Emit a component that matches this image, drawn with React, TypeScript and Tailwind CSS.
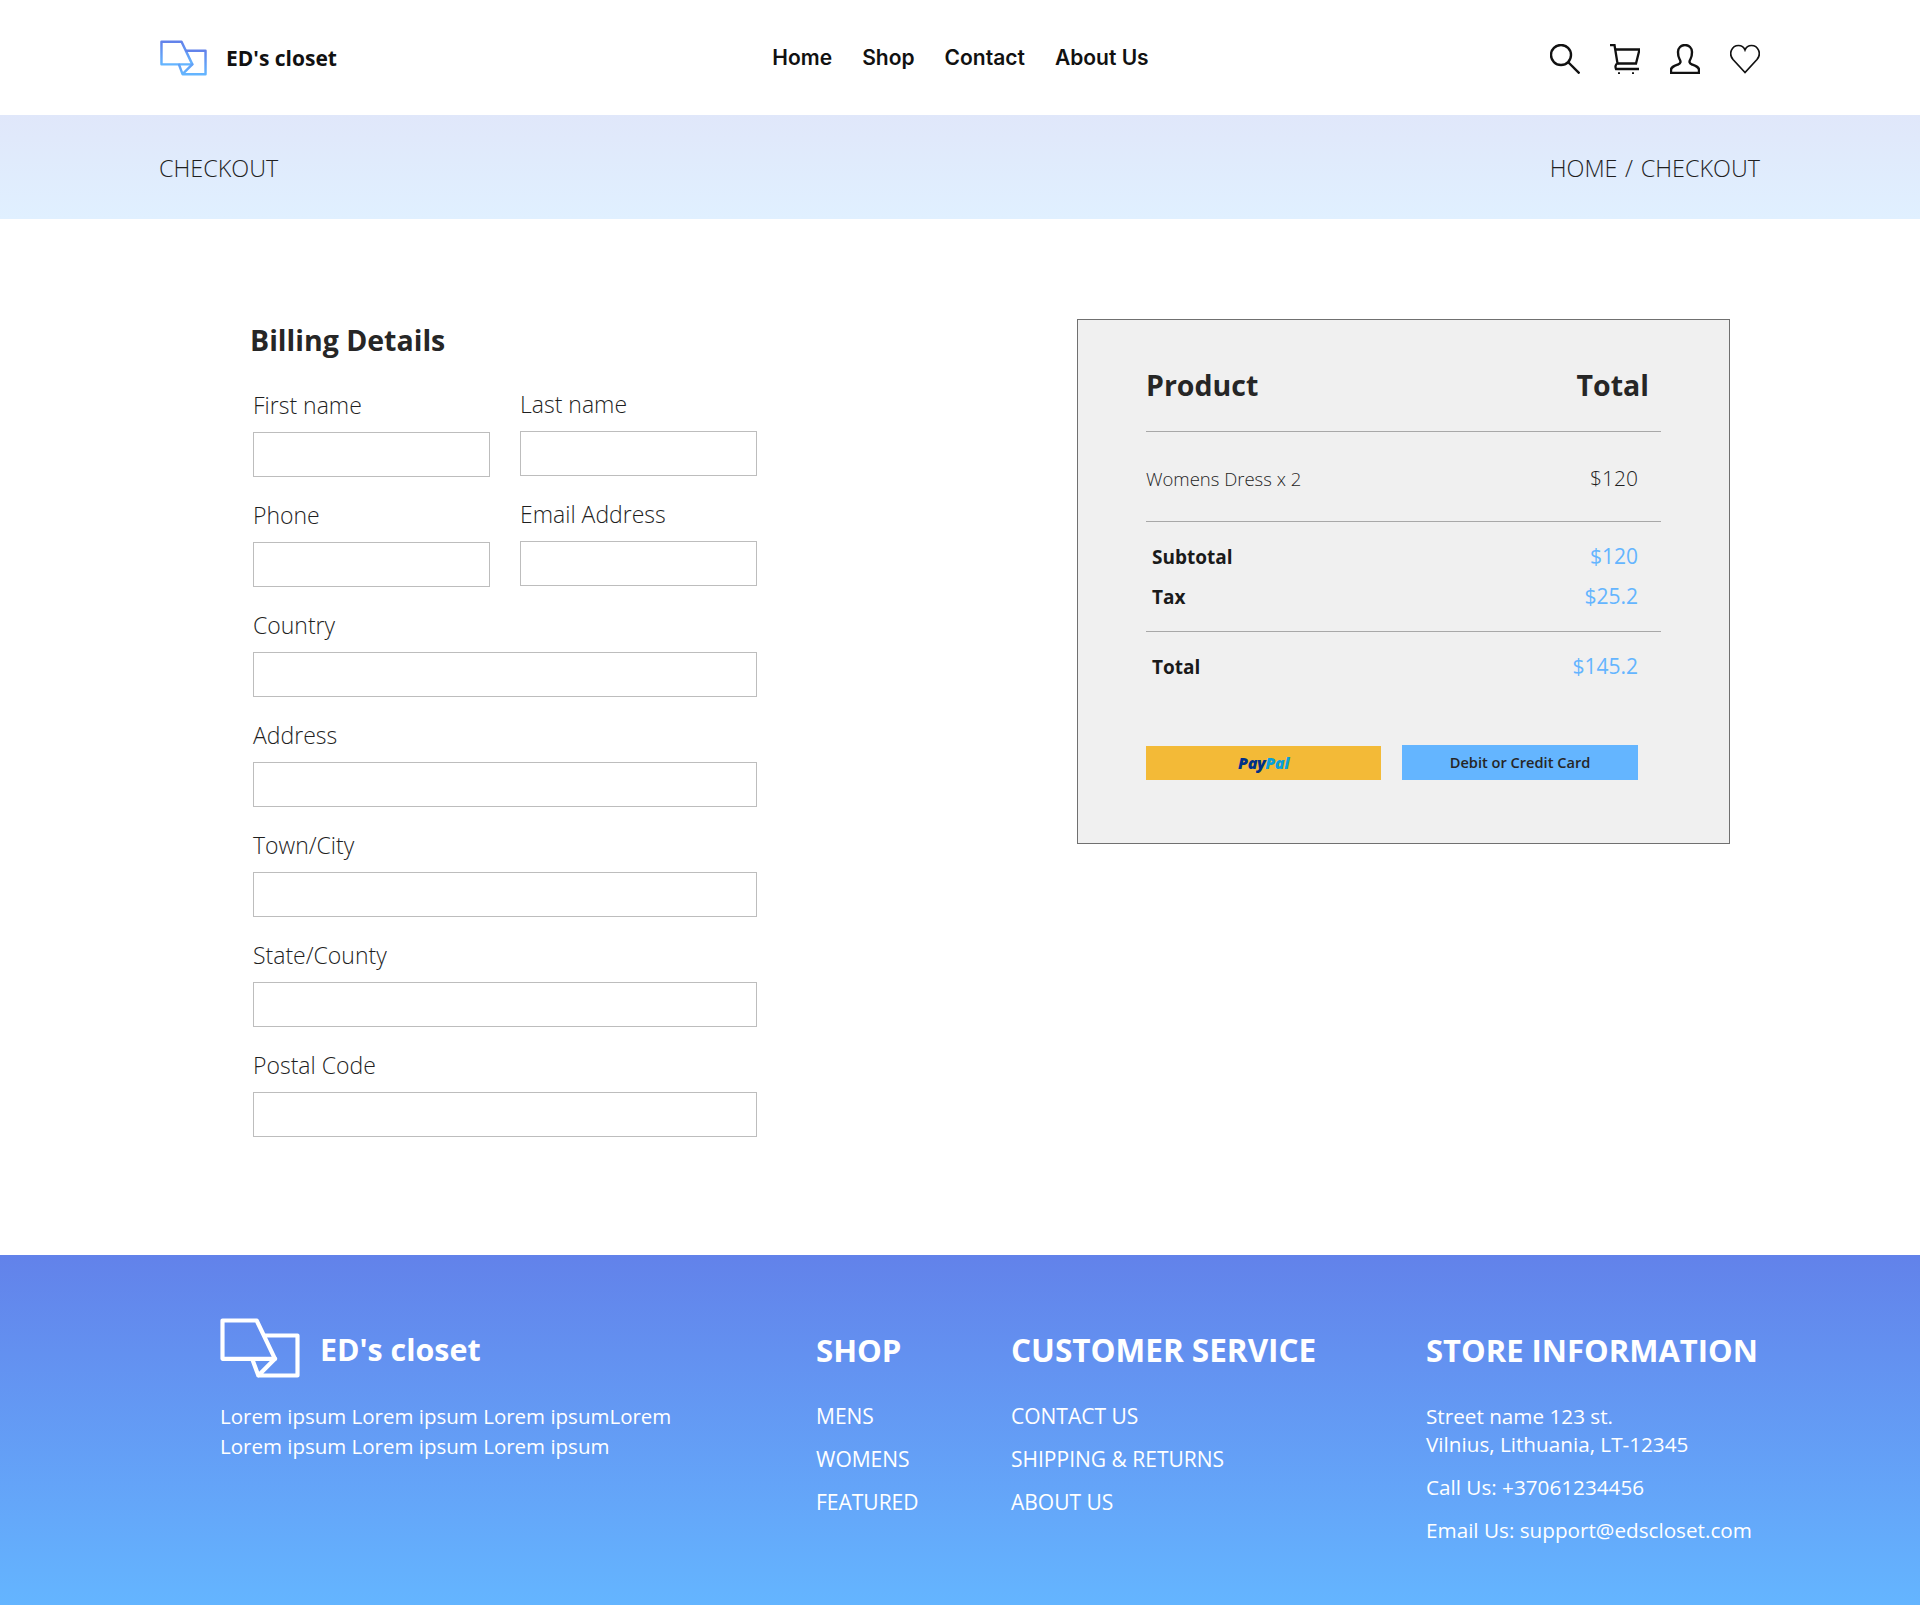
const segoe = "font-['Open_Sans','Noto_Sans',sans-serif]";

function Logo({ id, className, stroke }: { id: string; className: string; stroke?: string }) {
  return (
    <svg viewBox="0 0 48 36" fill="none" className={className}>
      <defs>
        <linearGradient id={id} x1="0" y1="0" x2="0" y2="1">
          <stop offset="0" stopColor="#6282ea" />
          <stop offset="1" stopColor="#64b5ff" />
        </linearGradient>
      </defs>
      <g stroke={stroke || `url(#${id})`} strokeWidth="2.5" strokeLinejoin="round" strokeLinecap="round">
        <path d="M1.5 1.5H22L33 24.5H1.5Z" />
        <path d="M27 10.5H46.5V34.5H23L19.5 25M23 34.5L33 24.5" />
      </g>
    </svg>
  );
}

function HeaderIcons() {
  return (
    <div className="flex gap-[30px] text-[#111]">
      <svg viewBox="0 0 30 30" fill="none" stroke="currentColor" strokeWidth="2.4" className="w-[30px] h-[30px]">
        <circle cx="11" cy="11" r="10" />
        <path d="M18 18L29.5 29.5" />
      </svg>
      <svg viewBox="0 0 30 30" fill="none" stroke="currentColor" strokeWidth="2.3" className="w-[30px] h-[30px]">
        <path d="M0 1H4.5L7.5 19.5C5.5 20 5 23 6 25H29" />
        <path d="M5 5.5H29.5L26 19.5H7.5" />
        <path d="M8 29.5H10M22 29.5H24" />
      </svg>
      <svg viewBox="0 0 30 30" fill="none" stroke="currentColor" strokeWidth="2.4" className="w-[30px] h-[30px]">
        <path d="M1 29V26C1 23 4 22 8 20.5C11 19.5 11 17.5 9.5 15C8 12.5 8 10 8 8C8 4 11 1 15 1C19 1 22 4 22 8C22 10 22 12.5 20.5 15C19 17.5 19 19.5 22 20.5C26 22 29 23 29 26V29Z" />
      </svg>
      <svg viewBox="0 0 30 30" fill="none" stroke="currentColor" strokeWidth="1.7" className="w-[30px] h-[30px]">
        <path d="M15 28.5L3 15.5C-2 9.5 2 1.5 8.5 1.5C11.5 1.5 14 3.5 15 6C16 3.5 18.5 1.5 21.5 1.5C28 1.5 32 9.5 27 15.5Z" />
      </svg>
    </div>
  );
}

function Field({ label, up }: { label: string; up?: boolean }) {
  return (
    <div className={up ? "-mt-px" : ""}>
      <label className="block h-[33px] mb-[10px] text-[23px] leading-[33px] font-light text-[#1f1f1f]">{label}</label>
      <input className="block w-full h-[45px] border border-[#bdbdbd] bg-white" />
    </div>
  );
}

function SummaryRow({ label, value, className }: { label: string; value: string; className: string }) {
  return (
    <div className={`flex justify-between items-center pl-[6px] pr-[23px] ${className}`}>
      <span className="text-[19px] font-bold text-[#1a1a1a]">{label}</span>
      <span className="text-[21px] font-normal text-[#64b5ff]">{value}</span>
    </div>
  );
}

export default function App() {
  return (
    <div className={`w-[1920px] min-h-[1605px] bg-white ${segoe}`}>
      <header className="h-[115px] pl-[160px] pr-[160px] pt-[3px] flex items-center justify-between">
        <div className="w-[211px] flex items-center gap-[19px]">
          <Logo id="headerLogo" className="w-[47px] h-[36px] -mt-[3px]" />
          <span className="text-[21px] font-bold text-[#111] whitespace-nowrap">ED's closet</span>
        </div>
        <nav className="flex gap-[30px] font-['Inter',sans-serif] text-[21px] font-semibold text-[#111] -mt-[3px]">
          <a>Home</a>
          <a>Shop</a>
          <a>Contact</a>
          <a>About Us</a>
        </nav>
        <HeaderIcons />
      </header>

      <div className="h-[104px] pl-[159px] pr-[160px] pt-[3px] flex items-center justify-between bg-gradient-to-b from-[#e0e7fa] to-[#e0f0ff] text-[23.4px] font-light text-[#1f1f1f]">
        <span>CHECKOUT</span>
        <span className="[word-spacing:1.5px]">HOME / CHECKOUT</span>
      </div>

      <main className="h-[1036px] pl-[253px] pt-[100px] flex items-start">
        <section className="w-[504px] pt-[3px]">
          <h2 className="-ml-[3px] h-[36px] mb-[31px] text-[28.5px] leading-[36px] font-bold text-[#262626]">Billing Details</h2>
          <div className="grid grid-cols-[237px_237px] gap-x-[30px] gap-y-[22px]">
            <Field label="First name" />
            <Field label="Last name" up />
            <Field label="Phone" />
            <Field label="Email Address" up />
            <div className="col-span-2"><Field label="Country" /></div>
            <div className="col-span-2"><Field label="Address" /></div>
            <div className="col-span-2"><Field label="Town/City" /></div>
            <div className="col-span-2"><Field label="State/County" /></div>
            <div className="col-span-2"><Field label="Postal Code" /></div>
          </div>
        </section>

        <aside className="ml-[320px] w-[653px] h-[525px] border border-[#707070] bg-[#f0f0f0] pl-[68px] pr-[68px]">
          <div className="h-[112px] pt-[43px] pr-[12px] flex justify-between items-start border-b border-[#a8a8a8] text-[28.5px] leading-[44px] font-bold text-[#262626]">
            <span>Product</span>
            <span>Total</span>
          </div>
          <div className="h-[90px] pt-[4px] pr-[23px] flex justify-between items-center border-b border-[#a8a8a8] text-[#1f1f1f]">
            <span className="text-[18.5px] font-light">Womens Dress x 2</span>
            <span className="text-[21px] font-light">$120</span>
          </div>
          <div className="h-[110px] pt-[15px] border-b border-[#a8a8a8]">
            <SummaryRow label="Subtotal" value="$120" className="h-[40px]" />
            <SummaryRow label="Tax" value="$25.2" className="h-[40px]" />
          </div>
          <SummaryRow label="Total" value="$145.2" className="h-[70px]" />
          <div className="mt-[43px] pr-[23px] flex justify-between items-center">
            <div className="w-[235px] h-[34px] bg-[#f3ba37] flex items-center justify-center text-[16px] font-extrabold italic tracking-tight">
              <span className="text-[#003087]">Pay</span>
              <span className="text-[#0a9fdb]">Pal</span>
            </div>
            <div className="w-[236px] h-[35px] bg-[#64b5ff] flex items-center justify-center text-[14.6px] font-semibold text-[#262626]">
              Debit or Credit Card
            </div>
          </div>
        </aside>
      </main>

      <footer className="h-[350px] pl-[220px] flex items-start bg-gradient-to-b from-[#6282ea] to-[#64b5ff] text-white text-[21px] font-normal">
        <div className="w-[596px] pt-[62px]">
          <div className="flex items-center gap-[20px]">
            <Logo id="footerLogo" stroke="#ffffff" className="w-[80px] h-[62px]" />
            <span className="text-[30.4px] font-bold pt-[4px]">ED's closet</span>
          </div>
          <p className="mt-[22px] text-[20.5px] leading-[30px]">
            Lorem ipsum Lorem ipsum Lorem ipsumLorem
            <br />
            Lorem ipsum Lorem ipsum Lorem ipsum
          </p>
        </div>
        <div className="w-[195px] pt-[73px]">
          <h3 className="h-[44px] mb-[23px] text-[31.2px] leading-[44px] font-bold">SHOP</h3>
          <ul className="leading-[43px]">
            <li>MENS</li>
            <li>WOMENS</li>
            <li>FEATURED</li>
          </ul>
        </div>
        <div className="w-[415px] pt-[73px]">
          <h3 className="h-[44px] mb-[23px] text-[31.5px] leading-[44px] font-bold whitespace-nowrap">CUSTOMER SERVICE</h3>
          <ul className="leading-[43px]">
            <li>CONTACT US</li>
            <li>SHIPPING &amp; RETURNS</li>
            <li>ABOUT US</li>
          </ul>
        </div>
        <div className="pt-[73px]">
          <h3 className="h-[44px] mb-[30px] text-[31px] leading-[44px] font-bold whitespace-nowrap">STORE INFORMATION</h3>
          <div className="text-[20.7px]">
            <p className="leading-[28px]">
              Street name 123 st.
              <br />
              Vilnius, Lithuania, LT-12345
            </p>
            <p className="mt-[15px] leading-[28px]">Call Us: +37061234456</p>
            <p className="mt-[15px] leading-[28px]">Email Us: support@edscloset.com</p>
          </div>
        </div>
      </footer>
    </div>
  );
}
